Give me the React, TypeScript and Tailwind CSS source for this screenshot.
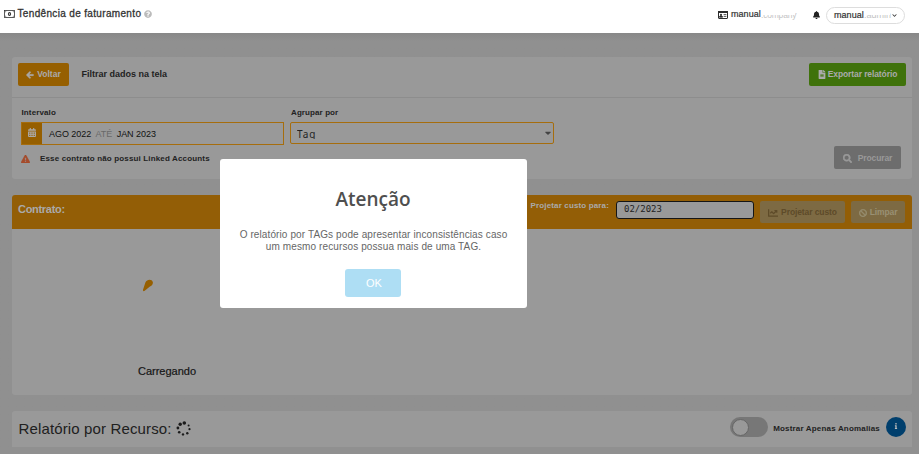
import React from 'react';
import {
  FaArrowLeft,
  FaBan,
  FaBell,
  FaCalendarAlt,
  FaCaretDown,
  FaChartLine,
  FaChevronDown,
  FaExclamationTriangle,
  FaFileAlt,
  FaInfo,
  FaQuestionCircle,
  FaSearch,
} from 'react-icons/fa';

function MoneyIcon() {
  return (
    <svg width="11" height="8" viewBox="0 0 11 8" fill="none" stroke="#333" className="shrink-0">
      <rect x="0.5" y="0.5" width="10" height="7" strokeWidth="0.8" />
      <ellipse cx="5.5" cy="4" rx="1.6" ry="2" fill="#333" stroke="none" />
      <path d="M5.5 3v2" stroke="#fff" strokeWidth="0.6" />
      <path d="M1 2.2L2.4 1M10 2.2L8.6 1M1 5.8L2.4 7M10 5.8L8.6 7" strokeWidth="0.6" />
    </svg>
  );
}

function CardIcon() {
  return (
    <svg width="10" height="8" viewBox="0 0 10 8" className="shrink-0">
      <rect x="0.5" y="0.5" width="9" height="7" rx="0.5" fill="#fff" stroke="#2c2c2c" />
      <path d="M0 0h10v2H0z" fill="#2c2c2c" />
      <circle cx="3" cy="3.7" r="1" fill="#2c2c2c" />
      <path d="M1.4 6.2c0-2 3.2-2 3.2 0zM5.6 3.6h2.8M5.6 5.4h2.8" fill="#2c2c2c" stroke="#2c2c2c" strokeWidth="0.8" />
    </svg>
  );
}

const dots = [
  { x: 8.3, y: 2, r: 1.8 },
  { x: 4.2, y: 3.2, r: 1.7 },
  { x: 1.9, y: 7, r: 1.4 },
  { x: 3.2, y: 11.2, r: 1.3 },
  { x: 7, y: 13.4, r: 1.2 },
  { x: 11.3, y: 12.2, r: 1.2 },
  { x: 13.5, y: 8.2, r: 1.1 },
  { x: 12.6, y: 4.4, r: 1 },
];

function Spinner() {
  return (
    <svg width="15" height="15" viewBox="0 0 15 15" fill="#1b1b1b" className="shrink-0">
      {dots.map((d) => (
        <circle key={`${d.x}-${d.y}`} cx={d.x} cy={d.y} r={d.r} />
      ))}
    </svg>
  );
}

function Header() {
  return (
    <header className="flex h-[33px] items-start bg-white text-[#333]">
      <div className="flex h-[27px] items-center pl-1">
        <MoneyIcon />
        <h1 className="ml-[2.5px] whitespace-nowrap text-[10px] font-normal tracking-[0.34px] [-webkit-text-stroke:0.3px_#333]">
          Tendência de faturamento
        </h1>
        <FaQuestionCircle className="ml-[3px] mt-px size-2 text-[#bbb]" />
      </div>
      <div className="ml-auto flex h-[30px] items-center pr-[14px] text-[9px]">
        <CardIcon />
        <span className="ml-[3px] w-[30px] whitespace-nowrap tracking-[0.05px] [-webkit-text-stroke:0.2px_#333]">manual</span>
        <span className="relative w-[38px] whitespace-nowrap text-[8.5px] tracking-[-0.2px] text-[#c4c4c4]">
          .company
          <i className="absolute left-0 top-0 h-[6px] w-[34px] bg-white" />
        </span>
        <FaBell className="ml-[14px] h-2 w-[7px] text-[#222]" />
        <div className="ml-[6px] mt-px flex h-[17px] w-[79px] items-center rounded-full border border-[#ddd] pl-[7px]">
          <span className="w-[30px] tracking-[0.05px] [-webkit-text-stroke:0.2px_#333]">manual</span>
          <span className="relative w-[26px] text-[#c4c4c4]">
            .admin
            <i className="absolute left-0 top-0 h-[6px] w-[26px] bg-white" />
          </span>
          <FaChevronDown className="ml-[2px] size-[5px]" />
        </div>
      </div>
    </header>
  );
}

function Filters() {
  return (
    <section className="h-[122px] rounded-[3px] bg-[#999]">
      <div className="flex h-[41px] items-start border-b border-[#8d8d8d] pl-[6px] pr-[6px] pt-[6px]">
        <button className="flex h-[23px] w-[51px] items-center justify-center gap-[3px] rounded-[2px] bg-[#965f00] text-[8.5px] font-bold text-[#aaa]">
          <FaArrowLeft className="size-[8px] stroke-current stroke-[40]" />
          Voltar
        </button>
        <span className="ml-[12.5px] whitespace-nowrap text-[9px] font-bold leading-[23px] text-[#222]">
          Filtrar dados na tela
        </span>
        <button className="ml-auto flex h-[23px] w-[97px] items-center justify-center gap-[2px] whitespace-nowrap rounded-[2px] bg-[#3f720b] text-[8.5px] font-bold tracking-[-0.1px] text-[#aaa]">
          <FaFileAlt className="h-[9px] w-2" />
          Exportar relatório
        </button>
      </div>
      <div className="flex h-[81px] pl-[9px] pr-[11px]">
        <div className="w-[263px] pt-[9px]">
          <label className="block h-[15px] pl-[0.5px] text-[8px] font-bold leading-3 tracking-[0.12px] text-[#222]">Intervalo</label>
          <div className="flex h-[23px] border border-[#a66d0d] bg-[#999]">
            <span className="flex w-5 items-center justify-center bg-[#965f00]">
              <FaCalendarAlt className="mb-[2px] h-[9px] w-2 text-[#aaa]" />
            </span>
            <span className="whitespace-pre pl-[7px] pt-px text-[9px] leading-[21px] tracking-[-0.05px] text-[#111]">
              AGO 2022 <span className="mx-[2px] text-[#696969]">ATÉ</span> JAN 2023
            </span>
          </div>
          <p className="mt-[8px] flex items-center whitespace-nowrap text-[8px] font-bold leading-3 tracking-[0.15px] text-[#222]">
            <FaExclamationTriangle className="mr-[10px] h-2 w-[9px] stroke-current stroke-[16] text-[#a54b2b]" />
            Esse contrato não possui Linked Accounts
          </p>
        </div>
        <div className="ml-[6px] w-[264px] pt-[9px]">
          <label className="block h-[15px] pl-px text-[8px] font-bold leading-3 tracking-[0.1px] text-[#222]">Agrupar por</label>
          <div className="flex h-[22px] items-start justify-between rounded-[2px] border border-[#a66d0d] pl-[6px] pr-[2px]">
            <span className="mt-1 h-[12px] overflow-hidden font-['Noto_Sans'] text-[10px] leading-[14px] tracking-[0.9px] text-[#222]">
              Tag
            </span>
            <FaCaretDown className="mt-[5px] h-[10px] w-[6px] text-[#444]" />
          </div>
        </div>
        <button className="ml-auto mt-12 flex h-[23px] w-[67px] items-center justify-center gap-[6px] rounded-[2px] bg-[#6d6d6d] pt-px text-[8.5px] font-bold tracking-[-0.1px] text-[#999]">
          <FaSearch className="size-[9px] stroke-current stroke-[30]" />
          Procurar
        </button>
      </div>
    </section>
  );
}

function Contract() {
  return (
    <section className="mt-4 h-[200px] overflow-hidden rounded-[3px] bg-[#999]">
      <div className="flex h-[34px] items-start bg-[#935e06] pr-[7px] pt-[6px] text-[#aaa]">
        <h2 className="ml-[6px] text-[11px] font-bold leading-4 tracking-[-0.3px]">Contrato:</h2>
        <label className="ml-auto mr-[7px] whitespace-nowrap text-[8px] font-bold leading-[9px] tracking-[0.14px]">
          Projetar custo para:
        </label>
        <div className="h-[18px] w-[138px] rounded-[3px] border border-[#151515] bg-[#999] pl-[7px] font-['DejaVu_Sans_Mono'] text-[9px] leading-[14px] text-[#222]">
          02/2023
        </div>
        <button className="ml-[6px] flex h-[22px] w-[85px] items-center justify-center gap-[3px] whitespace-nowrap rounded-[2px] bg-[#7d6a43] pt-px text-[8.5px] font-bold tracking-[-0.1px] text-[#5e4b29]">
          <FaChartLine className="size-[10px]" />
          Projetar custo
        </button>
        <button className="ml-[6px] flex h-[22px] w-[54px] items-center justify-center gap-[3px] rounded-[2px] bg-[#7d6a43] pt-px text-[8.5px] font-bold tracking-[-0.1px] text-[#999073]">
          <FaBan className="size-2 stroke-current stroke-[24]" />
          Limpar
        </button>
      </div>
      <div className="flex w-[310px] flex-col items-center">
        <svg width="12" height="14" viewBox="0 0 12 14" className="mr-[39px] mt-[50px]" fill="#965f00">
          <path d="M3.4 3.6C5-.2 10-.1 10.8 3c.5 2.3-1.1 4-3.2 4.7L2.7 11.8c-1.2.9-2.2.2-1.6-1.2z" />
        </svg>
        <p className="mt-[70px] text-[11px] leading-4 text-[#151515] [-webkit-text-stroke:0.2px_#151515]">
          Carregando
        </p>
      </div>
    </section>
  );
}

function Resources() {
  return (
    <section className="mt-4 flex h-9 items-center rounded-t-[3px] bg-[#999] pl-[6.5px] pr-[6px]">
      <h2 className="whitespace-nowrap text-[15px] leading-[34px] tracking-[0.14px] text-[#202020]">Relatório por Recurso:</h2>
      <span className="mb-px ml-1">
        <Spinner />
      </span>
      <div className="mb-1 ml-auto flex h-5 w-[38px] items-center rounded-full bg-[#777] px-[2px]">
        <i className="size-[17px] rounded-full border border-[#666] bg-[#999]" />
      </div>
      <span className="ml-[5px] whitespace-nowrap text-[8px] font-bold tracking-[0.18px] text-[#222]">Mostrar Apenas Anomalias</span>
      <span className="mb-1 ml-[6px] flex size-5 items-center justify-center rounded-full bg-[#003f6d]">
        <FaInfo className="mb-[2px] size-[6px] text-[#bbb]" />
      </span>
    </section>
  );
}

function AttentionDialog() {
  return (
    <div
      role="dialog"
      className="absolute left-[220px] top-[159px] flex h-[149px] w-[307px] flex-col items-center rounded-[3px] bg-white"
    >
      <h2 className="mt-[27px] pr-px font-['Open_Sans'] text-[19px] font-semibold leading-[27px] text-[#4f4f4f]">
        Atenção
      </h2>
      <p className="mt-4 whitespace-nowrap text-center text-[10px] leading-3 tracking-[0.11px] text-[#666]">
        O relatório por TAGs pode apresentar inconsistências caso
        <br />
        um mesmo recursos possua mais de uma TAG.
      </p>
      <button className="mr-px mt-4 h-7 w-14 rounded-[3px] bg-[#aedef4] pl-[2px] pt-px text-[11px] text-white">OK</button>
    </div>
  );
}

export default function App() {
  return (
    <div className="relative h-[454px] w-[919px] overflow-hidden bg-[#909090] font-['Liberation_Sans',Arial,sans-serif]">
      <Header />
      <main className="bg-linear-to-b from-[#888] to-[#909090] to-[8px] pl-3 pr-[7px] pt-6">
        <Filters />
        <Contract />
        <Resources />
      </main>
      <AttentionDialog />
    </div>
  );
}
